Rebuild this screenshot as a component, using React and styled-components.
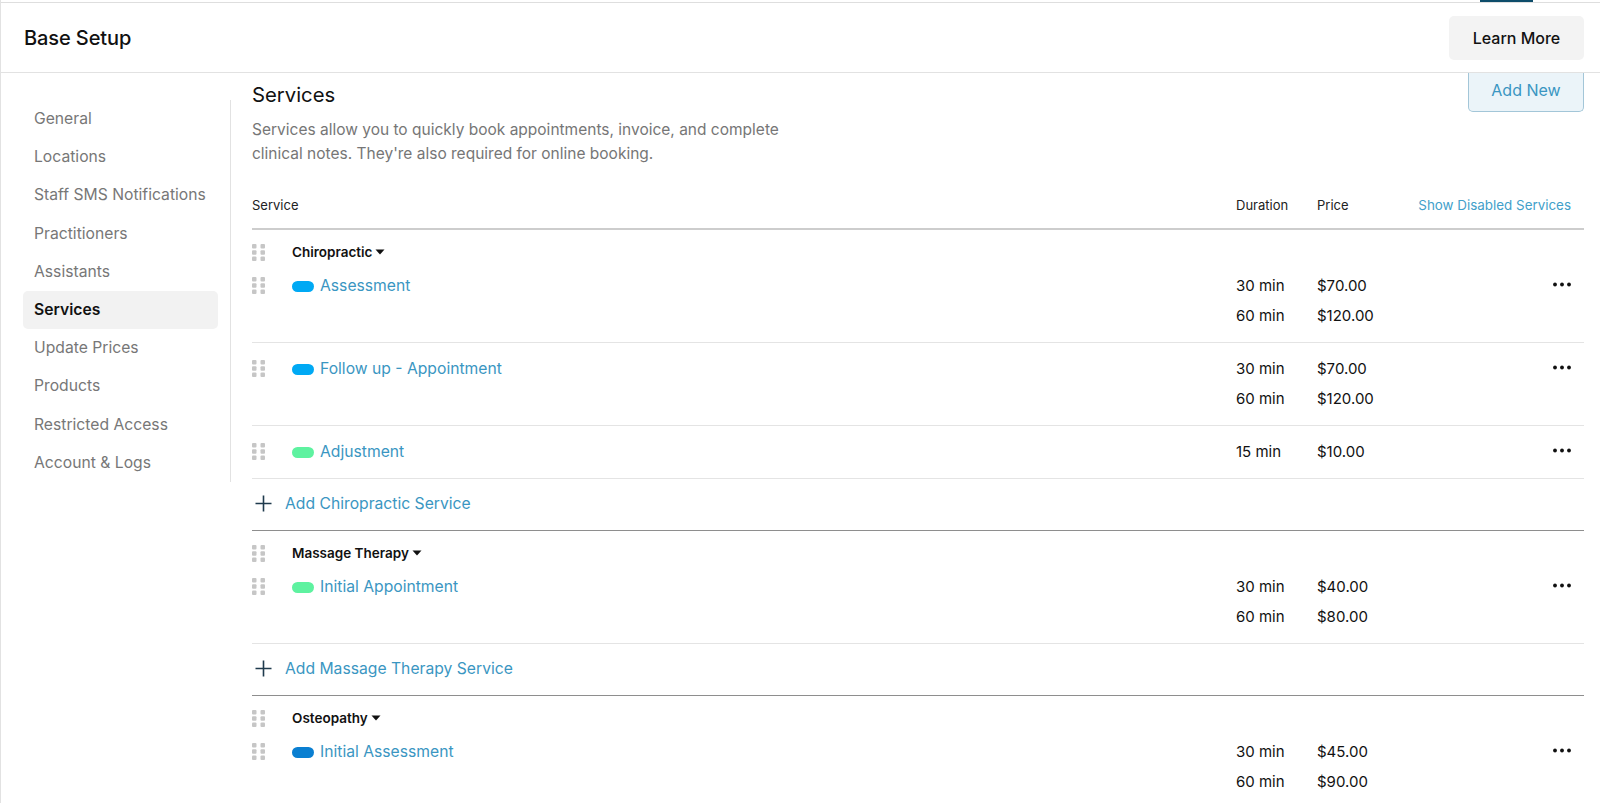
import React from 'react';
import styled, { createGlobalStyle } from 'styled-components';

const GlobalStyle = createGlobalStyle`
  body {
    margin: 0;
    background: #fff;
    font-family: Inter, "Noto Sans", sans-serif;
    color: #111;
  }
  * { box-sizing: border-box; }
`;

const Page = styled.div`
  min-height: 100vh;
  border-left: 1px solid #e2e2e2;
`;

const TopStrip = styled.div`
  display: flex;
  justify-content: flex-end;
  padding-right: 67px;
  height: 3px;
  border-bottom: 1px solid #dedede;
`;

const Tab = styled.div`
  width: 53px;
  height: 2px;
  background: #0d4c6a;
`;

const Header = styled.header`
  display: flex;
  align-items: center;
  justify-content: space-between;
  height: 70px;
  padding: 0 16px 0 23px;
  border-bottom: 1px solid #e2e2e2;
`;

const HeaderTitle = styled.h1`
  margin: 0;
  font-size: 20px;
  font-weight: 500;
  letter-spacing: -0.1px;
`;

const GreyButton = styled.button`
  height: 44px;
  width: 135px;
  border: none;
  border-radius: 5px;
  background: #f3f3f3;
  font-family: inherit;
  font-size: 16px;
  font-weight: 500;
  color: #111;
`;

const Body = styled.div`
  display: flex;
  align-items: flex-start;
`;

const Sidebar = styled.nav`
  width: 230px;
  margin-top: 27px;
  padding: 0 12px 0 22px;
  border-right: 1px solid #e2e2e2;
  display: flex;
  flex-direction: column;
`;

const NavItem = styled.div`
  height: 38.2px;
  line-height: 38px;
  padding-left: 11px;
  border-radius: 5px;
  font-size: 15.7px;
  color: ${p => (p.$active ? '#111' : '#777')};
  font-weight: ${p => (p.$active ? 600 : 400)};
  background: ${p => (p.$active ? '#f2f2f2' : 'transparent')};
`;

const Main = styled.main`
  flex: 1;
  padding: 0 16px 40px 21px;
`;

const TitleRow = styled.div`
  display: flex;
  justify-content: space-between;
  align-items: flex-start;
`;

const TitleBlock = styled.div`
  padding-top: 8px;
`;

const SectionTitle = styled.h2`
  margin: 0;
  font-size: 20.3px;
  line-height: 28px;
  font-weight: 400;
`;

const Description = styled.p`
  margin: 9px 0 0;
  max-width: 580px;
  font-size: 15.5px;
  line-height: 24px;
  color: #767676;
`;

const OutlineButton = styled.button`
  width: 116px;
  height: 39px;
  padding: 0 0 4px;
  border: 1px solid #a3c6d8;
  border-top: none;
  border-radius: 0 0 5px 5px;
  background: #ebf4f9;
  font-family: inherit;
  font-size: 16px;
  color: #3a96c2;
`;

const Table = styled.div`
  margin-top: 29px;
`;

const Row = styled.div`
  display: grid;
  grid-template-columns: 1fr 81px 101px 153px;
  padding-right: 13px;
`;

const HeadRow = styled(Row)`
  padding-bottom: 13px;
  border-bottom: 2px solid #cdcdcd;
  font-size: 13px;
  line-height: 20px;
  color: #222;
`;

const HeadLink = styled.div`
  text-align: right;
  white-space: nowrap;
  font-size: 13.4px;
  color: #42a0ca;
`;

const GroupRow = styled.div`
  display: flex;
  align-items: center;
  height: 30px;
  padding-top: 14px;
`;

const HandleCell = styled.div`
  width: 40px;
  display: flex;
  align-items: center;
`;

const GroupName = styled.div`
  display: flex;
  align-items: center;
  gap: 3px;
  font-size: 13.5px;
  line-height: 16px;
  font-weight: 600;
  color: #111;
`;

const ServiceRow = styled(Row)`
  padding-top: 11px;
  padding-bottom: 11px;
  border-bottom: 1px solid #e4e4e4;
  font-size: 15px;
  line-height: 30px;
`;

const ServiceCell = styled.div`
  display: flex;
  align-items: flex-start;
`;

const ServiceHandle = styled.div`
  width: 40px;
  height: 30px;
  display: flex;
  align-items: center;
  margin-top: -1px;
`;

const Pill = styled.span`
  width: 22px;
  height: 11px;
  border-radius: 6px;
  background: ${p => p.$color};
  margin: 10px 6px 0 0;
`;

const ServiceName = styled.span`
  font-size: 15.7px;
  color: #3a96c2;
`;

const Lines = styled.div`
  display: flex;
  flex-direction: column;
`;

const Actions = styled.div`
  display: flex;
  justify-content: flex-end;
  align-items: center;
  height: 30px;
  margin-top: -2px;
`;

const AddRow = styled.div`
  display: flex;
  align-items: center;
  height: 52px;
  padding: 0 0 3px 3px;
  border-bottom: 1px solid #8e8e8e;
  font-size: 15.7px;
  color: #3a96c2;
  gap: 13px;
`;

const Handle = () => (
  <svg width="13" height="17" viewBox="0 0 13 17">
    {[0, 6.25, 12.5].map(y =>
      [0, 8.5].map(x => (
        <rect key={`${x}-${y}`} x={x} y={y} width="4.5" height="4.5" rx="1" fill="#c6c6c6" />
      ))
    )}
  </svg>
);

const Caret = () => (
  <svg width="10" height="6" viewBox="0 0 10 6">
    <path d="M0.5 0.5 H9.5 L5 5.5 Z" fill="#111" />
  </svg>
);

const Dots = () => (
  <svg width="18" height="5" viewBox="0 0 18 5">
    <circle cx="2" cy="2.5" r="1.9" fill="#111" />
    <circle cx="9" cy="2.5" r="1.9" fill="#111" />
    <circle cx="16" cy="2.5" r="1.9" fill="#111" />
  </svg>
);

const Plus = () => (
  <svg width="17" height="17" viewBox="0 0 17 17">
    <path d="M8.5 0.5 V16.5 M0.5 8.5 H16.5" stroke="#1f3a4d" strokeWidth="1.6" />
  </svg>
);

const navItems = [
  'General',
  'Locations',
  'Staff SMS Notifications',
  'Practitioners',
  'Assistants',
  'Services',
  'Update Prices',
  'Products',
  'Restricted Access',
  'Account & Logs',
];

const groups = [
  {
    name: 'Chiropractic',
    addLabel: 'Add Chiropractic Service',
    services: [
      { name: 'Assessment', color: '#00a9f4', options: [['30 min', '$70.00'], ['60 min', '$120.00']] },
      { name: 'Follow up - Appointment', color: '#00a9f4', options: [['30 min', '$70.00'], ['60 min', '$120.00']] },
      { name: 'Adjustment', color: '#5ef2a0', options: [['15 min', '$10.00']] },
    ],
  },
  {
    name: 'Massage Therapy',
    addLabel: 'Add Massage Therapy Service',
    services: [
      { name: 'Initial Appointment', color: '#5ef2a0', options: [['30 min', '$40.00'], ['60 min', '$80.00']] },
    ],
  },
  {
    name: 'Osteopathy',
    services: [
      { name: 'Initial Assessment', color: '#0a7fd1', options: [['30 min', '$45.00'], ['60 min', '$90.00']] },
    ],
  },
];

const App = () => {
  return (
    <Page>
      <GlobalStyle />
      <TopStrip>
        <Tab />
      </TopStrip>
      <Header>
        <HeaderTitle>Base Setup</HeaderTitle>
        <GreyButton>Learn More</GreyButton>
      </Header>
      <Body>
        <Sidebar>
          {navItems.map(item => (
            <NavItem key={item} $active={item === 'Services'}>
              {item}
            </NavItem>
          ))}
        </Sidebar>
        <Main>
          <TitleRow>
            <TitleBlock>
              <SectionTitle>Services</SectionTitle>
              <Description>
                Services allow you to quickly book appointments, invoice, and complete clinical notes. They're also
                required for online booking.
              </Description>
            </TitleBlock>
            <OutlineButton>Add New</OutlineButton>
          </TitleRow>
          <Table>
            <HeadRow>
              <div>Service</div>
              <div>Duration</div>
              <div>Price</div>
              <HeadLink>Show Disabled Services</HeadLink>
            </HeadRow>
            {groups.map(group => (
              <React.Fragment key={group.name}>
                <GroupRow>
                  <HandleCell>
                    <Handle />
                  </HandleCell>
                  <GroupName>
                    {group.name}
                    <Caret />
                  </GroupName>
                </GroupRow>
                {group.services.map(s => (
                  <ServiceRow key={s.name}>
                    <ServiceCell>
                      <ServiceHandle>
                        <Handle />
                      </ServiceHandle>
                      <Pill $color={s.color} />
                      <ServiceName>{s.name}</ServiceName>
                    </ServiceCell>
                    <Lines>
                      {s.options.map(o => (
                        <span key={o[0]}>{o[0]}</span>
                      ))}
                    </Lines>
                    <Lines>
                      {s.options.map(o => (
                        <span key={o[0]}>{o[1]}</span>
                      ))}
                    </Lines>
                    <Actions>
                      <Dots />
                    </Actions>
                  </ServiceRow>
                ))}
                {group.addLabel && (
                  <AddRow>
                    <Plus />
                    {group.addLabel}
                  </AddRow>
                )}
              </React.Fragment>
            ))}
          </Table>
        </Main>
      </Body>
    </Page>
  );
};

export default App;
